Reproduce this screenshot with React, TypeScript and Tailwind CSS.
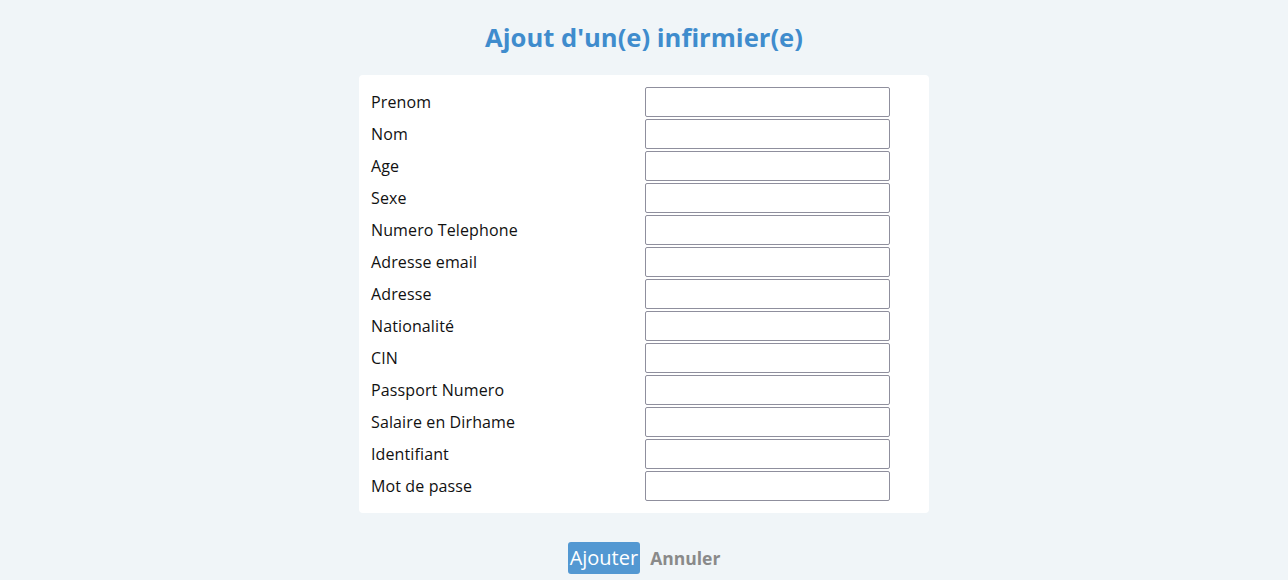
const fields = [
  "Prenom",
  "Nom",
  "Age",
  "Sexe",
  "Numero Telephone",
  "Adresse email",
  "Adresse",
  "Nationalité",
  "CIN",
  "Passport Numero",
  "Salaire en Dirhame",
  "Identifiant",
  "Mot de passe",
];

export default function App() {
  return (
    <div className="min-h-[580px] bg-[#f0f5f8] font-['Open_Sans',sans-serif] flex flex-col items-center">
      <h1 className="mt-[20px] text-[25.6px] leading-[36px] font-bold text-[#3f8ccd]">
        Ajout d'un(e) infirmier(e)
      </h1>
      <div className="mt-[19px] w-[570px] rounded bg-white px-[12px] pt-[12px] pb-[12px]">
        <div className="flex flex-col gap-[2px]">
          {fields.map((f) => (
            <div key={f} className="flex items-center h-[30px]">
              <label className="w-[274px] text-[16px] tracking-[0.12px] text-[#111]">{f}</label>
              <input
                type={f === "Mot de passe" ? "password" : "text"}
                className="w-[245px] h-[30px] border border-[#8f8f9d] rounded-[2px] bg-white"
              />
            </div>
          ))}
        </div>
      </div>
      <div className="mt-[29px] flex items-center gap-[10px]">
        <button className="h-[32px] px-[2px] rounded-[3px] bg-[#5398d2] text-white text-[20px] leading-[32px]">
          Ajouter
        </button>
        <button className="text-[17.5px] font-bold text-[#8a8a8a]">Annuler</button>
      </div>
    </div>
  );
}
